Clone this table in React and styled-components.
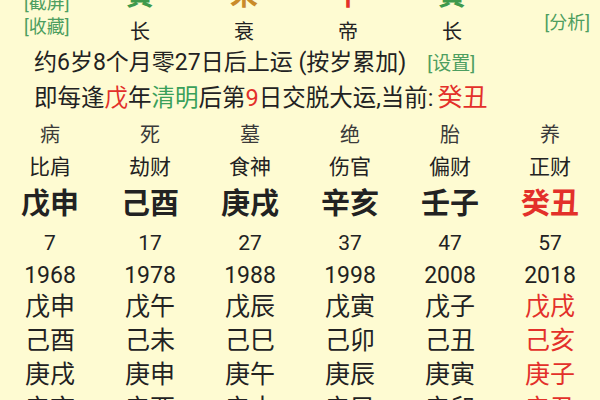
import React from "react";
import styled, { createGlobalStyle } from "styled-components";

const GlobalStyle = createGlobalStyle`
  html, body {
    margin: 0;
    padding: 0;
    background: #fefbd2;
  }
  body {
    font-family: Roboto, "Noto Sans CJK SC", sans-serif;
    color: #222;
  }
`;

const Page = styled.div`
  width: 600px;
  height: 400px;
  overflow: hidden;
  background: #fefbd2;
`;

const Header = styled.div`
  display: grid;
  grid-template-columns: 88px repeat(4, 104px) 1fr;
  grid-template-rows: 24px 24px;
  margin-top: -19px;
`;

const LinkStack = styled.div`
  grid-row: 1 / 3;
  grid-column: 1;
  display: flex;
  flex-direction: column;
  align-items: flex-start;
  padding-left: 24px;
  transform: translateY(10px);
`;

const GreenLink = styled.span`
  color: #4d9e60;
  font-size: ${(p) => p.$size || 18}px;
  line-height: 24px;
  white-space: nowrap;
`;

const Branch = styled.div`
  grid-row: 1;
  text-align: center;
  font-size: 28px;
  line-height: 24px;
  font-weight: 700;
  color: ${(p) => p.$color};
  font-family: "Noto Sans CJK SC", sans-serif;
`;

const Stage = styled.div`
  grid-row: 2;
  text-align: center;
  font-size: 20px;
  line-height: 24px;
  transform: translateY(15px);
`;

const RightLink = styled.div`
  grid-row: 2;
  grid-column: 6;
  text-align: right;
  padding-right: 10px;
  transform: translateY(6px);
`;

const Info = styled.div`
  padding-left: 34px;
  margin-top: 16px;
`;

const InfoLine = styled.div`
  font-size: ${(p) => p.$size}px;
  line-height: 35px;
  white-space: nowrap;
  display: flex;
  align-items: baseline;
`;

const Hl = styled.span`
  color: ${(p) => p.$color};
  font-size: ${(p) => (p.$size ? `${p.$size}px` : "inherit")};
`;

const Gap = styled.span`
  display: inline-block;
  width: ${(p) => p.$w}px;
`;

const Table = styled.div`
  display: grid;
  grid-template-columns: repeat(6, 100px);
  margin-top: 3px;
`;

const Cell = styled.div`
  text-align: center;
  white-space: nowrap;
  font-size: ${(p) => p.$size}px;
  line-height: ${(p) => p.$lh}px;
  font-weight: ${(p) => (p.$bold ? 700 : 400)};
  color: ${(p) => (p.$red ? "#e3302a" : p.$muted ? "#3a3a3a" : "#222")};
`;

const pillars = [
  { branch: "寅", color: "#3f9a4d", stage: "长" },
  { branch: "未", color: "#c98a2a", stage: "衰" },
  { branch: "午", color: "#e3302a", stage: "帝" },
  { branch: "寅", color: "#3f9a4d", stage: "长" },
];

const columns = [
  { st: "病", god: "比肩", gz: "戊申", age: 7, year: 1968, rows: ["戊申", "己酉", "庚戌", "辛亥"] },
  { st: "死", god: "劫财", gz: "己酉", age: 17, year: 1978, rows: ["戊午", "己未", "庚申", "辛酉"] },
  { st: "墓", god: "食神", gz: "庚戌", age: 27, year: 1988, rows: ["戊辰", "己巳", "庚午", "辛未"] },
  { st: "绝", god: "伤官", gz: "辛亥", age: 37, year: 1998, rows: ["戊寅", "己卯", "庚辰", "辛巳"] },
  { st: "胎", god: "偏财", gz: "壬子", age: 47, year: 2008, rows: ["戊子", "己丑", "庚寅", "辛卯"] },
  { st: "养", god: "正财", gz: "癸丑", age: 57, year: 2018, rows: ["戊戌", "己亥", "庚子", "辛丑"], current: true },
];

const App = () => {
  return (
    <Page>
      <GlobalStyle />
      <Header>
        <LinkStack>
          <GreenLink>[截屏]</GreenLink>
          <GreenLink>[收藏]</GreenLink>
        </LinkStack>
        {pillars.map((p, i) => (
          <Branch key={"b" + i} $color={p.color} style={{ gridColumn: i + 2 }}>
            {p.branch}
          </Branch>
        ))}
        {pillars.map((p, i) => (
          <Stage key={"s" + i} style={{ gridColumn: i + 2 }}>
            {p.stage}
          </Stage>
        ))}
        <RightLink>
          <GreenLink>[分析]</GreenLink>
        </RightLink>
      </Header>

      <Info>
        <InfoLine $size={23}>
          约6岁8个月零27日后上运 (按岁累加)
          <Gap $w={21} />
          <GreenLink $size={19}>[设置]</GreenLink>
        </InfoLine>
        <InfoLine $size={23.5}>
          即每逢<Hl $color="#e3302a">戊</Hl>年<Hl $color="#3aa05a">清明</Hl>后第
          <Hl $color="#e3302a">9</Hl>日交脱大运,当前:
          <Gap $w={4} />
          <Hl $color="#e3302a" $size={25}>癸丑</Hl>
        </InfoLine>
      </Info>

      <Table>
        {columns.map((c) => (
          <Cell key={"st" + c.st} $size={20} $lh={32} $muted>{c.st}</Cell>
        ))}
        {columns.map((c) => (
          <Cell key={"g" + c.god + c.st} $size={21} $lh={32}>{c.god}</Cell>
        ))}
        {columns.map((c) => (
          <Cell key={"gz" + c.gz} $size={29} $lh={42} $bold $red={c.current}>{c.gz}</Cell>
        ))}
        {columns.map((c) => (
          <Cell key={"a" + c.age} $size={21} $lh={36}>{c.age}</Cell>
        ))}
        {columns.map((c) => (
          <Cell key={"y" + c.year} $size={23} $lh={29}>{c.year}</Cell>
        ))}
        {[0, 1, 2, 3].map((r) =>
          columns.map((c) => (
            <Cell key={"r" + r + c.year} $size={25} $lh={34} $red={c.current}>
              {c.rows[r]}
            </Cell>
          ))
        )}
      </Table>
    </Page>
  );
};

export default App;
